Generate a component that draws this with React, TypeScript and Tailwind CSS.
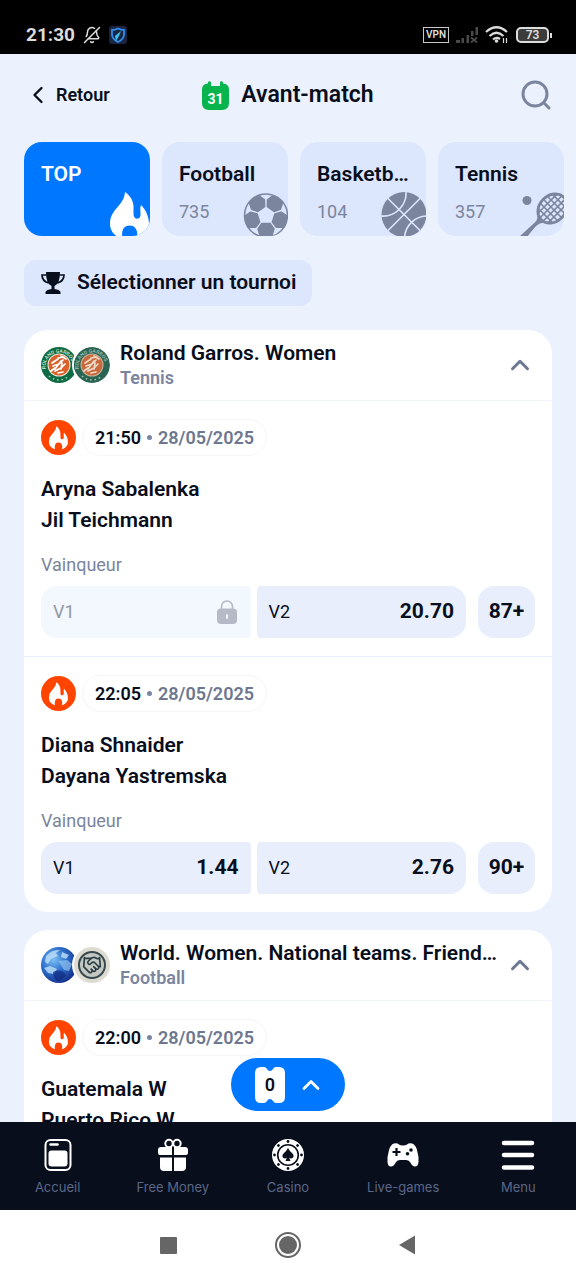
import { useState } from 'react';
import type { ReactNode } from 'react';
import { BellOff, ChevronLeft, ChevronUp, Handshake } from 'lucide-react';
import clsx from 'clsx';

interface Match {
  id: string;
  time: string;
  date: string;
  home: string;
  away: string;
  v1: string | null;
  v2: string | null;
  more: number;
}

interface Tournament {
  id: string;
  title: string;
  sport: string;
  logos: ReactNode;
  matches: Match[];
}

const FLAME_PATH =
  'M15 0C20 3.500 23 8 23.500 14V22C23.500 28 30 28.500 30.500 23C30.800 20 29.500 17 31 13C36 18 39 25 39 32C39 39 34.500 44.500 27 47C28 41 27 33.500 19.500 33.500C12 33.500 11.500 41 12.500 47C4.500 44.500 0 39 0 31.500C0 24 4 19 8 14.500C11.500 10.500 14.500 6.500 15 0Z';

const BALL_ANGLES = [0, 72, 144, 216, 288];

function FootballIcon() {
  return (
    <g transform="translate(23 24.500)">
      <circle r="21.500" fill="none" stroke="currentColor" strokeWidth="1.500" />
      {BALL_ANGLES.map(a => (
        <path
          key={a}
          transform={`rotate(${a})`}
          d="M-4.200 8H4.200L8 13.500L6.200 19.500Q0 22.500 -6.200 19.500L-8 13.500Z"
          fill="currentColor"
          stroke="currentColor"
          strokeWidth="1.400"
          strokeLinejoin="round"
        />
      ))}
    </g>
  );
}

function BasketballIcon() {
  return (
    <g transform="translate(23 23.500)">
      <circle r="22.500" fill="currentColor" />
      <g fill="none" stroke="#dce6fc" strokeWidth="1.600">
        <path d="M-17 -17L17 17M17 -17L-17 17" />
        <path d="M-23 1.500A23 23 0 0 0 2 -23M23 1.500A23 23 0 0 0 0.500 23" />
      </g>
    </g>
  );
}

function TennisIcon() {
  return (
    <g>
      <circle cx="8" cy="9.500" r="4.500" fill="currentColor" />
      <g transform="translate(33.500 17.500) rotate(-45)" fill="none" stroke="currentColor">
        <ellipse rx="16" ry="13" strokeWidth="2.800" />
        <path d="M-10 -9V9M-5 -12V12M0 -13V13M5 -12V12M10 -9V9M-13 -7H13M-15 -2.300H15M-15 2.300H15M-13 7H13" strokeWidth="1.600" />
      </g>
      <path d="M18.500 24L25.500 31.500C18 32.500 17 35 8 46H0L12 35C17 30.500 18.500 30 18.500 24Z" fill="currentColor" />
    </g>
  );
}

const CATEGORIES: { name: string; count: string; icon: ReactNode }[] = [
  { name: 'TOP', count: '', icon: <path d={FLAME_PATH} transform="translate(5 1)" fill="currentColor" /> },
  { name: 'Football', count: '735', icon: <FootballIcon /> },
  { name: 'Basketball', count: '104', icon: <BasketballIcon /> },
  { name: 'Tennis', count: '357', icon: <TennisIcon /> },
  { name: '', count: '', icon: null },
];

function RolandGarrosLogo({ id, faded }: { id: string; faded?: boolean }) {
  return (
    <svg viewBox="0 0 36 36" className="w-9 h-9">
      <circle cx="18" cy="18" r="18" fill={faded ? '#2a6553' : '#0f6b43'} />
      <circle cx="18" cy="18" r="11.500" fill={faded ? '#c9b49b' : '#f4e6d6'} />
      <circle cx="18" cy="18" r="10.500" fill={faded ? '#c96a3c' : '#d9622b'} />
      <path
        d="M14 22L20 14M17 11L23 10M20 9L25 12M11 16L17 12M12 19L18 17L22 13M14 24L20 21L24 17M17 26L22 25M21 16L20 22M10 24L14 21"
        fill="none"
        stroke={faded ? '#eed9c6' : '#ffffff'}
        strokeWidth="1.700"
        strokeLinecap="round"
      />
      <path id={id} d="M4.800 22A13.500 13.500 0 1 1 31.200 22" fill="none" />
      <text fill={faded ? '#a9c2b5' : '#d6ebdf'} className="font-['Roboto'] font-medium text-[5px]">
        <textPath href={`#${id}`}>ROLAND GARROS</textPath>
      </text>
      <path d="M8 29Q18 37 28 29" fill="none" stroke={faded ? '#a9c2b5' : '#a5cfb9'} strokeWidth="1.500" strokeDasharray="1.500 3" />
    </svg>
  );
}

function GlobeLogo() {
  return (
    <svg viewBox="0 0 36 36" className="w-9 h-9">
      <defs>
        <radialGradient id="globe" cx="0.350" cy="0.350" r="0.700">
          <stop offset="0" stopColor="#7cc0f4" />
          <stop offset="0.500" stopColor="#2e6fcd" />
          <stop offset="1" stopColor="#14308a" />
        </radialGradient>
      </defs>
      <circle cx="18" cy="18" r="18" fill="url(#globe)" />
      <path d="M5 9Q11 2 19 3L15 6L17 9L10 12L7 17L4 15ZM21 5L28 8L25 12L20 10ZM3 21L9 19L16 22L13 27L7 26Z" fill="#bfe0f8" opacity="0.800" />
      <path d="M17 14L26 13L31 17L28 24L23 23L20 18Z" fill="#8fc3ee" opacity="0.700" />
      <path d="M12 25Q20 21 25 28Q21 34 16 34Q12 31 12 25Z" fill="#102a7d" opacity="0.700" />
    </svg>
  );
}

function FriendlyLogo() {
  return (
    <span className="flex items-center justify-center w-9 h-9 rounded-full bg-[#dedbd1]">
      <span className="flex items-center justify-center w-7 h-7 rounded-full border-2 border-[#36494e] bg-[#c3c8c2]">
        <Handshake className="w-5 h-5 text-[#2c3e44]" strokeWidth={2} />
      </span>
    </span>
  );
}

const TOURNAMENTS: Tournament[] = [
  {
    id: 'rg-women',
    title: 'Roland Garros. Women',
    sport: 'Tennis',
    logos: (
      <>
        <RolandGarrosLogo id="rg-a" />
        <RolandGarrosLogo id="rg-b" faded />
      </>
    ),
    matches: [
      { id: 'm1', time: '21:50', date: '28/05/2025', home: 'Aryna Sabalenka', away: 'Jil Teichmann', v1: null, v2: '20.70', more: 87 },
      { id: 'm2', time: '22:05', date: '28/05/2025', home: 'Diana Shnaider', away: 'Dayana Yastremska', v1: '1.44', v2: '2.76', more: 90 },
    ],
  },
  {
    id: 'friendlies',
    title: 'World. Women. National teams. Friendlies',
    sport: 'Football',
    logos: (
      <>
        <GlobeLogo />
        <FriendlyLogo />
      </>
    ),
    matches: [
      { id: 'm3', time: '22:00', date: '28/05/2025', home: 'Guatemala W', away: 'Puerto Rico W', v1: '1.90', v2: '3.40', more: 112 },
    ],
  },
];

function StatusBar() {
  return (
    <div className="flex items-center shrink-0 h-[54px] pt-4 pl-[26px] pr-6 bg-black text-[#dcdcdc]">
      <span className="text-[19px] leading-6 font-bold">21:30</span>
      <BellOff className="w-[18px] h-[18px] ml-2 -scale-x-100" strokeWidth={2} />
      <svg viewBox="0 0 18 18" className="w-[18px] h-[18px] ml-2">
        <rect width="18" height="18" rx="3" fill="#1b2440" />
        <path d="M9 2.500Q12 4 15 4V9Q14.500 13.500 9 16Q3.500 13.500 3 9V4Q6 4 9 2.500Z" fill="none" stroke="#2e8fee" strokeWidth="1.800" />
        <path d="M7 15L6 10L12 5L10 10Z" fill="#36c3ef" />
      </svg>
      <div className="flex items-center gap-[7px] ml-auto">
        <span className="px-[2px] border border-[#c8c8c8] text-[10px] leading-[14px] font-semibold">VPN</span>
        <svg viewBox="0 0 22 16" className="w-[22px] h-4" fill="#4a4a4a">
          <path d="M0 13h4v3H0zM5.500 11h2.500v5H5.500zM10.500 8h2.500v8h-2.500zM15 4h2.500v5H15zM19.500 0h2.500v8h-2.500z" />
          <path d="M15 10.500L21 15.500M21 10.500L15 15.500" stroke="#4a4a4a" strokeWidth="1.800" />
        </svg>
        <svg viewBox="0 0 24 18" className="w-6 h-[18px]" fill="none" stroke="currentColor" strokeWidth="2.200">
          <path d="M1 6Q11.500 -3.500 22 6M4.500 10Q11.500 3.500 18.500 10M8 13.500Q11.500 10.500 15 13" />
          <circle cx="11.500" cy="15" r="1.800" fill="currentColor" stroke="none" />
          <path d="M18.500 12v5M21.500 12v5" strokeWidth="1.200" />
        </svg>
        <span className="flex items-center">
          <span className="w-[33px] h-4 rounded-[5px] border-2 border-current bg-[#3c3c3c] text-[12px] leading-3 font-semibold text-center">73</span>
          <span className="w-[2px] h-[5px] ml-px bg-current" />
        </span>
      </div>
    </div>
  );
}

function Header() {
  return (
    <header className="grid grid-cols-[1fr_auto_1fr] items-center shrink-0 h-[82px] px-6">
      <button className="flex items-center gap-1 justify-self-start text-lg font-semibold">
        <ChevronLeft className="w-7 h-7" strokeWidth={2} />
        Retour
      </button>
      <div className="flex items-center gap-3">
        <svg viewBox="0 0 27 29" className="w-[27px] h-[29px]">
          <path
            d="M6 2.500V1Q7.500 -0.500 9 1V5H18V1Q19.500 -0.500 21 1V2.500Q27 3 27 8.500V22Q27 29 20 29H7Q0 29 0 22V8.500Q0 3 6 2.500Z"
            fill="#08b54d"
          />
          <path d="M9 2H18V5H9Z" fill="#ebf2fe" />
          <text x="13.500" y="22.500" textAnchor="middle" fill="#ffffff" className="font-['Roboto'] font-bold text-[14px]">
            31
          </text>
        </svg>
        <h1 className="text-[23px] font-semibold">Avant-match</h1>
      </div>
      <button aria-label="Rechercher" className="justify-self-end text-[#7b859e]">
        <svg viewBox="0 0 32 32" className="w-8 h-8" fill="none" stroke="currentColor" strokeWidth="3" strokeLinecap="round">
          <circle cx="15" cy="15" r="12" />
          <path d="M24 24L29 29" />
        </svg>
      </button>
    </header>
  );
}

function CategoryCard({ name, count, icon, active, onClick }: {
  name: string;
  count: string;
  icon: ReactNode;
  active: boolean;
  onClick: () => void;
}) {
  return (
    <button
      onClick={onClick}
      aria-label={name || 'Autres'}
      className={clsx(
        'relative flex flex-col shrink-0 w-[126px] h-[94px] pl-[17px] pr-3 pt-5 rounded-[18px] overflow-hidden text-left',
        active ? 'bg-[#0077ff] text-white' : 'bg-[#dce6fc]'
      )}
    >
      <span className="w-full truncate text-[21px] leading-6 font-semibold">{name}</span>
      <span className="mt-3.5 text-lg leading-6 text-[#7b859e]">{count}</span>
      <svg
        viewBox="0 0 45 45"
        className={clsx('absolute right-0 bottom-0 w-[45px] h-[45px]', active ? 'text-white' : 'text-[#7b859e]')}
      >
        {icon}
      </svg>
    </button>
  );
}

function OddButton({ label, value, className }: { label: string; value: string | null; className: string }) {
  const locked = value === null;
  return (
    <button
      disabled={locked}
      className={clsx(
        'flex items-center justify-between flex-1 h-[52px] px-3',
        locked ? 'bg-[#f3f7fe]' : 'bg-[#e8eefb]',
        className
      )}
    >
      <span className={clsx('text-lg', locked && 'text-[#9297a4]')}>{label}</span>
      {locked ? (
        <svg viewBox="0 0 22 24" className="w-[22px] h-6 text-[#b5bac6]">
          <path d="M4.500 10V6.500A5.500 5.500 0 0 1 15.500 6.500V10" fill="none" stroke="currentColor" strokeWidth="1.600" />
          <rect y="8.500" width="20" height="15.500" rx="4" fill="currentColor" />
          <rect x="9" y="14" width="2" height="5" rx="1" fill="#f3f7fe" />
        </svg>
      ) : (
        <span className="text-[21px] font-bold">{value}</span>
      )}
    </button>
  );
}

function MatchRow({ match }: { match: Match }) {
  return (
    <article className="px-[17px] pt-[18px] pb-[18px]">
      <div className="flex items-center gap-1.5 h-[37px]">
        <svg viewBox="0 0 36 36" className="w-[35px] h-[35px]">
          <circle cx="18" cy="18" r="18" fill="#ff4500" />
          <path d={FLAME_PATH} transform="translate(8.200 6.500) scale(0.500)" fill="#ffffff" />
        </svg>
        <div className="flex items-center gap-1.5 h-[37px] px-3 rounded-full border border-[#f3f5f9] text-lg font-semibold">
          <span>{match.time}</span>
          <span className="w-[5px] h-[5px] rounded-full bg-[#7b859e]" />
          <span className="text-[#6d7790]">{match.date}</span>
        </div>
      </div>
      <div className="mt-[18px] text-[21px] leading-[31px] font-semibold">
        <p>{match.home}</p>
        <p>{match.away}</p>
      </div>
      <p className="mt-[17px] text-lg leading-6 text-[#7b859e]">Vainqueur</p>
      <div className="flex mt-[9px]">
        <OddButton label="V1" value={match.v1} className="rounded-l-2xl rounded-r-[4px]" />
        <OddButton label="V2" value={match.v2} className="ml-1.5 rounded-l-[4px] rounded-r-2xl" />
        <button className="w-[57px] h-[52px] ml-3 rounded-2xl bg-[#e8eefb] text-[21px] font-bold">{match.more}+</button>
      </div>
    </article>
  );
}

function TournamentCard({ tournament }: { tournament: Tournament }) {
  const [open, setOpen] = useState(true);

  return (
    <section className="rounded-3xl bg-white overflow-hidden">
      <button
        onClick={() => setOpen(!open)}
        aria-expanded={open}
        className="flex items-center w-full h-[71px] px-[17px] border-b border-[#f0f4fd] text-left"
      >
        <span className="flex shrink-0 *:nth-2:-ml-[3px] *:nth-2:rounded-full *:nth-2:ring-2 *:nth-2:ring-white">
          {tournament.logos}
        </span>
        <span className="flex-1 min-w-0 ml-2.5">
          <span className="block w-[380px] max-w-full truncate text-[21px] leading-[26px] font-semibold">{tournament.title}</span>
          <span className="block text-lg leading-6 font-semibold text-[#7b859e]">{tournament.sport}</span>
        </span>
        <ChevronUp className={clsx('shrink-0 w-[30px] h-[30px] text-[#6d7790]', !open && 'rotate-180')} strokeWidth={2.4} />
      </button>
      {open && (
        <div className="divide-y divide-[#e9effc]">
          {tournament.matches.map(m => (
            <MatchRow key={m.id} match={m} />
          ))}
        </div>
      )}
    </section>
  );
}

function BetSlipButton() {
  return (
    <button
      aria-label="Coupon, 0 pari"
      className="absolute bottom-[11px] left-1/2 -translate-x-1/2 flex items-center gap-3 h-[53px] pl-6 pr-5 rounded-full bg-[#0077ff] text-white"
    >
      <span className="relative flex items-center justify-center w-[30px] h-9">
        <svg viewBox="0 0 30 36" className="absolute inset-0 w-full h-full">
          <path
            d="M6 0H9Q11 0 12 2Q13 4 15 4T18 2Q19 0 21 0H24Q30 0 30 6V30Q30 36 24 36H21Q19 36 18 34Q17 32 15 32T12 34Q11 36 9 36H6Q0 36 0 30V6Q0 0 6 0Z"
            fill="#ffffff"
          />
        </svg>
        <span className="relative text-lg leading-6 font-semibold text-[#080e1c]">0</span>
      </span>
      <ChevronUp className="w-7 h-7" strokeWidth={2.4} />
    </button>
  );
}

const CHIP_NOTCHES = [0, 45, 90, 135, 180, 225, 270, 315];

const NAV_ITEMS: { label: string; icon: ReactNode }[] = [
  {
    label: 'Accueil',
    icon: (
      <>
        <rect x="4.500" y="2" width="25" height="30" rx="5" fill="none" stroke="currentColor" strokeWidth="2" />
        <path d="M9.500 6.500H16.500" stroke="currentColor" strokeWidth="2.500" strokeLinecap="round" />
        <rect x="7.500" y="12.500" width="19" height="16" rx="3" />
      </>
    ),
  },
  {
    label: 'Free Money',
    icon: (
      <>
        <circle cx="13" cy="5.500" r="3.700" fill="none" stroke="currentColor" strokeWidth="2" />
        <circle cx="21" cy="5.500" r="3.700" fill="none" stroke="currentColor" strokeWidth="2" />
        <path d="M5 9H16V17H4Q2 17 2 15V12Q2 9 5 9ZM18 9H29Q32 9 32 12V15Q32 17 30 17H18ZM4 19.500H16V33H8Q4 33 4 29ZM18 19.500H30V29Q30 33 26 33H18Z" />
      </>
    ),
  },
  {
    label: 'Casino',
    icon: (
      <>
        <circle cx="17" cy="17" r="16" />
        {CHIP_NOTCHES.map(a => (
          <circle key={a} cx="17" cy="3.500" r="1.400" fill="#080e1c" transform={`rotate(${a} 17 17)`} />
        ))}
        <circle cx="17" cy="17" r="10.300" fill="none" stroke="#080e1c" strokeWidth="1.600" />
        <path
          d="M17 10Q18.500 13 21 15Q24 18 21.500 20Q19.500 21 18 19.500L19.500 23H14.500L16 19.500Q14.500 21 12.500 20Q10 18 13 15Q15.500 13 17 10Z"
          fill="#080e1c"
        />
      </>
    ),
  },
  {
    label: 'Live-games',
    icon: (
      <>
        <path d="M8 5.500Q11 4.500 13 6.500Q14 7.500 17 7.500T21 6.500Q23 4.500 26 5.500Q29.500 6.500 31 12Q33 19 32.500 24Q32 29 28.500 28.500Q26 28 24 24Q22.500 22 20 22H14Q11.500 22 10 24Q8 28 5.500 28.500Q2 29 1.500 24Q1 19 3 12Q4.500 6.500 8 5.500Z" />
        <path d="M10.500 10V18M6.500 14H14.500" stroke="#080e1c" strokeWidth="2.200" />
        <circle cx="25" cy="12" r="1.800" fill="#080e1c" />
        <circle cx="21.500" cy="15.800" r="1.800" fill="#080e1c" />
      </>
    ),
  },
  {
    label: 'Menu',
    icon: <path d="M3 5H31M3 17H31M3 29.500H31" stroke="currentColor" strokeWidth="4.500" strokeLinecap="round" />,
  },
];

function BottomNav() {
  return (
    <nav className="grid grid-cols-5 shrink-0 h-[88px] pt-4 bg-[#080e1c]">
      {NAV_ITEMS.map(item => (
        <a key={item.label} href="#" className="flex flex-col items-center gap-[7px] text-white">
          <svg viewBox="0 0 34 34" className="w-[34px] h-[34px]" fill="currentColor">
            {item.icon}
          </svg>
          <span className="font-['Inter',sans-serif] text-[13px] leading-4 text-[#5a6787]">{item.label}</span>
        </a>
      ))}
    </nav>
  );
}

function SystemNav() {
  return (
    <div className="flex items-center justify-center gap-[98px] shrink-0 h-[70px] bg-white text-[#666666]">
      <button aria-label="Applications récentes" className="w-[17px] h-[17px] rounded-[1px] bg-current" />
      <button aria-label="Écran d'accueil" className="w-[26px] h-[26px] p-[2px] rounded-full border-2 border-current">
        <span className="block w-full h-full rounded-full bg-current" />
      </button>
      <button aria-label="Précédent">
        <svg viewBox="0 0 17 20" className="w-[17px] h-5" fill="currentColor">
          <path d="M16 0.500V19.500L0 10Z" />
        </svg>
      </button>
    </div>
  );
}

export default function App() {
  const [category, setCategory] = useState('TOP');

  return (
    <div className="flex flex-col h-screen bg-[#ebf2fe] font-['Roboto',sans-serif] text-[#080e1c]">
      <StatusBar />
      <Header />
      <div className="relative flex-1 min-h-0">
        <main className="h-full overflow-hidden">
          <div className="flex gap-3 pt-1.5 pl-6 overflow-hidden">
            {CATEGORIES.map(c => (
              <CategoryCard key={c.name} {...c} active={c.name === category} onClick={() => setCategory(c.name)} />
            ))}
          </div>
          <div className="px-6 pt-6">
            <button className="flex items-center gap-3 h-[46px] pl-[17px] pr-4 rounded-xl bg-[#dce6fc] text-[21px] font-semibold">
              <svg viewBox="0 0 24 22" className="w-6 h-[22px]" fill="currentColor">
                <path d="M5 0H19Q19 12 13.500 14V17Q18.500 17.500 19.500 20V22H4.500V20Q5.500 17.500 10.500 17V14Q5 12 5 0Z" />
                <path d="M5.500 3H1Q1 9 7.500 11M18.500 3H23Q23 9 16.500 11" fill="none" stroke="currentColor" strokeWidth="1.700" />
              </svg>
              Sélectionner un tournoi
            </button>
          </div>
          <div className="flex flex-col gap-[18px] px-6 pt-6">
            {TOURNAMENTS.map(t => (
              <TournamentCard key={t.id} tournament={t} />
            ))}
          </div>
        </main>
        <BetSlipButton />
      </div>
      <BottomNav />
      <SystemNav />
    </div>
  );
}
